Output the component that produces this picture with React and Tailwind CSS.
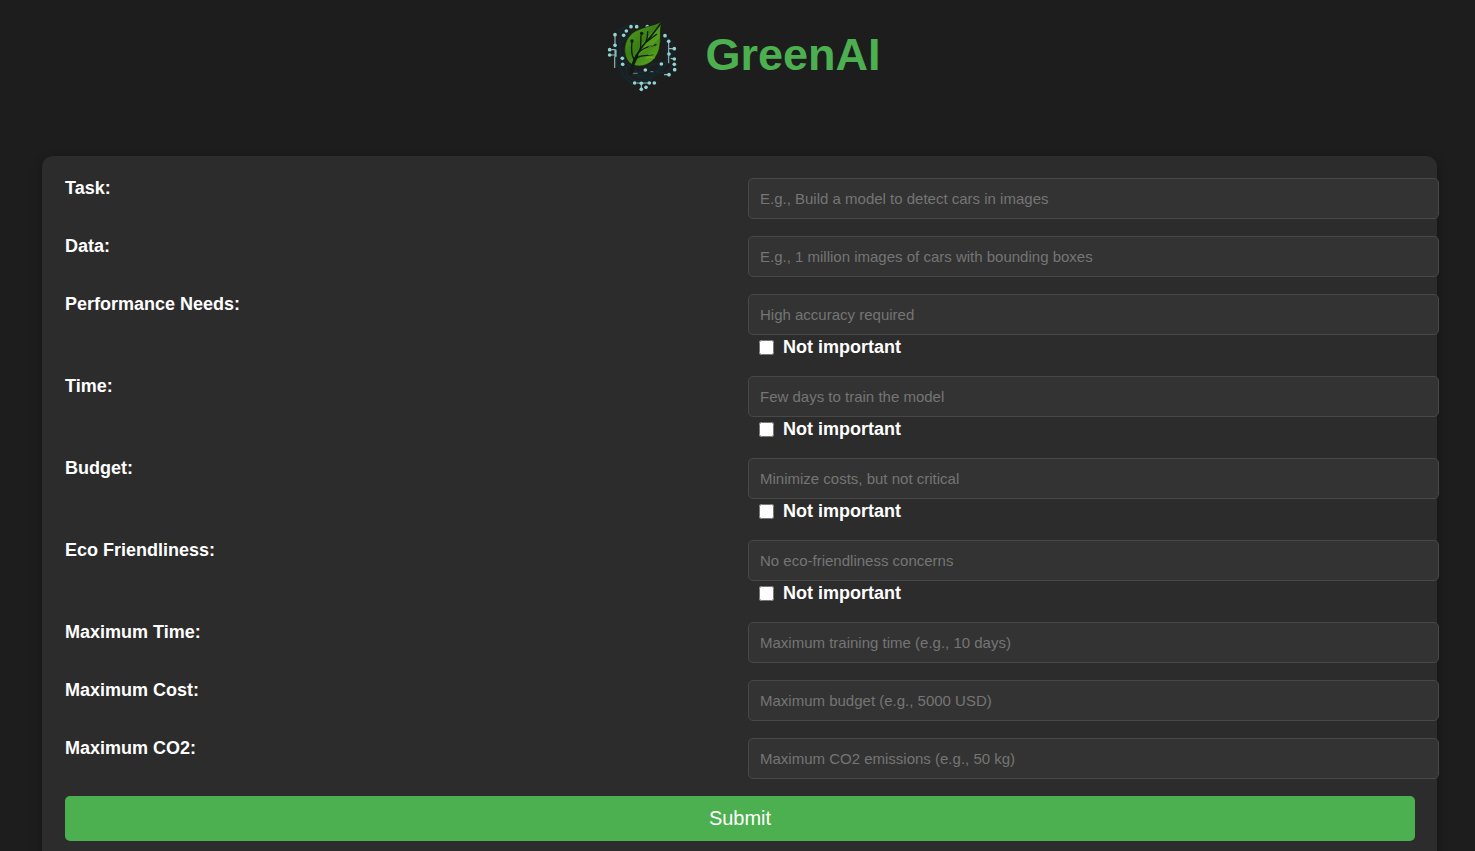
import React from 'react';

const fields = [
  { id: 'task', label: 'Task:', placeholder: 'E.g., Build a model to detect cars in images' },
  { id: 'data', label: 'Data:', placeholder: 'E.g., 1 million images of cars with bounding boxes' },
  { id: 'performance', label: 'Performance Needs:', placeholder: 'High accuracy required', optional: true },
  { id: 'time', label: 'Time:', placeholder: 'Few days to train the model', optional: true },
  { id: 'budget', label: 'Budget:', placeholder: 'Minimize costs, but not critical', optional: true },
  { id: 'eco', label: 'Eco Friendliness:', placeholder: 'No eco-friendliness concerns', optional: true },
  { id: 'max-time', label: 'Maximum Time:', placeholder: 'Maximum training time (e.g., 10 days)' },
  { id: 'max-cost', label: 'Maximum Cost:', placeholder: 'Maximum budget (e.g., 5000 USD)' },
  { id: 'max-co2', label: 'Maximum CO2:', placeholder: 'Maximum CO2 emissions (e.g., 50 kg)' },
];

const nodes = [
  [96, 44], [113, 44], [82, 57], [74, 70], [48, 68], [48, 100], [32, 113], [32, 129],
  [70, 139], [71, 157], [145, 44], [198, 71], [209, 88], [210, 126], [226, 110],
  [226, 141], [226, 157], [227, 173], [210, 188], [187, 156], [139, 174],
  [107, 213], [127, 232], [151, 213], [166, 213], [141, 226], [127, 214],
];

function Logo() {
  return (
    <svg className="size-[90px] shrink-0" viewBox="-15 -3 270 270" fill="none" role="img" aria-label="GreenAI logo">
      <defs>
        <linearGradient id="leaf" x1="80" y1="60" x2="165" y2="150" gradientUnits="userSpaceOnUse">
          <stop offset="0" stopColor="#4f9a1c" />
          <stop offset="0.45" stopColor="#3a7d14" />
          <stop offset="1" stopColor="#57a31f" />
        </linearGradient>
      </defs>
      <g stroke="#14282f" strokeWidth="5">
        <path d="M63 70V150L82 169V190L105 206H150L178 181H202L222 160" />
        <path d="M52 88V156L70 177V188L101 218" />
        <path d="M100 190H139L156 179H180L203 156V86" />
        <path d="M110 172V181H137M139 174L160 156H187M190 66L219 88V148" />
        <path d="M70 90L94 64M77 108V147L93 162M115 197H151L178 170L213 136" />
        <path d="M72 70L58 55L86 42L103 35L120 44" />
      </g>
      <g stroke="#8fb5b8" strokeWidth="3.5">
        <path d="M48 68V101M37 113H48V136M32 129H48M47 134V168M51 113V134" />
        <path d="M209 88V154M210 110H226M215 139L226 141M195 188H210" />
        <path d="M113 213H147M127 214V232" />
        <path d="M101 184H116M154 179H163" strokeWidth="2" />
      </g>
      <g fill="#91d5d2">
        {nodes.map(([x, y]) => (
          <circle key={`${x}-${y}`} cx={x} cy={y} r="5.5" />
        ))}
      </g>
      <path d="M188 29C166 40 135 44 110 57C83 72 74 99 78 124C81 147 96 163 122 162C149 161 171 142 180 113C188 84 181 57 188 29Z" fill="url(#leaf)" stroke="#10200e" strokeWidth="2" />
      <path d="M186 34C155 62 128 94 108 133C128 121 158 104 182 78C181 61 182 49 186 34Z" fill="#5fae22" opacity="0.6" />
      <g stroke="#101b16" strokeLinecap="round">
        <path d="M97 182C99 148 121 111 150 80L186 34" strokeWidth="5" />
        <path d="M97 182L102 157L114 130" strokeWidth="9" />
        <path d="M106 144C98 132 96 112 99 88M122 115C130 99 121 85 128 64M140 91C145 79 147 70 146 59" strokeWidth="4" />
        <path d="M106 145C119 127 139 132 162 128M118 123C133 104 150 105 171 98M145 88L173 67" strokeWidth="4" />
      </g>
      <path d="M140 139L151 135L168 138M148 106L165 98M148 128L164 126" stroke="#79bd35" strokeWidth="2" />
      <g fill="#101b16">
        <circle cx="99" cy="87" r="5" />
        <circle cx="128" cy="64" r="5" />
      </g>
    </svg>
  );
}

function Field({ id, label, placeholder, optional }) {
  return (
    <>
      <label htmlFor={id} className="text-[18px] leading-5 font-bold">{label}</label>
      <div className="min-w-0">
        <input
          id={id}
          type="text"
          placeholder={placeholder}
          className="block h-[41px] w-[calc(100%+24px)] rounded-[5px] border border-[#484848] bg-[#333333] px-[11px] text-[15px] text-white placeholder:text-[#757575]"
        />
        {optional && (
          <label className="flex h-6 w-fit items-center gap-[9px] pl-[11px] text-[18px] leading-6 font-bold">
            <input type="checkbox" name={`${id}-optional`} className="size-[15px]" />
            Not important
          </label>
        )}
      </div>
    </>
  );
}

export default function App() {
  return (
    <div className="min-h-screen bg-[#1d1d1d] pt-[11px] pb-5 font-['Liberation_Sans',Arial,sans-serif] text-white">
      <header className="flex items-center justify-center gap-[21px]">
        <Logo />
        <h1 className="pb-0.5 text-[45px] leading-[52px] font-bold text-[#4caf50]">GreenAI</h1>
      </header>
      <main className="mt-[55px] mr-[38px] ml-[42px] rounded-[11px] bg-[#2c2c2c] pt-[22px] pr-[22px] pb-[22px] pl-[23px] shadow-[0_4px_11px_rgba(0,0,0,0.3)]">
        <form className="grid grid-cols-2 gap-x-4 gap-y-[17px]" onSubmit={(e) => e.preventDefault()}>
          {fields.map((field) => (
            <Field key={field.id} {...field} />
          ))}
          <button type="submit" className="col-span-2 h-[45px] rounded-[5px] bg-[#4caf50] pb-0.5 text-[20px] text-white">
            Submit
          </button>
        </form>
      </main>
    </div>
  );
}
